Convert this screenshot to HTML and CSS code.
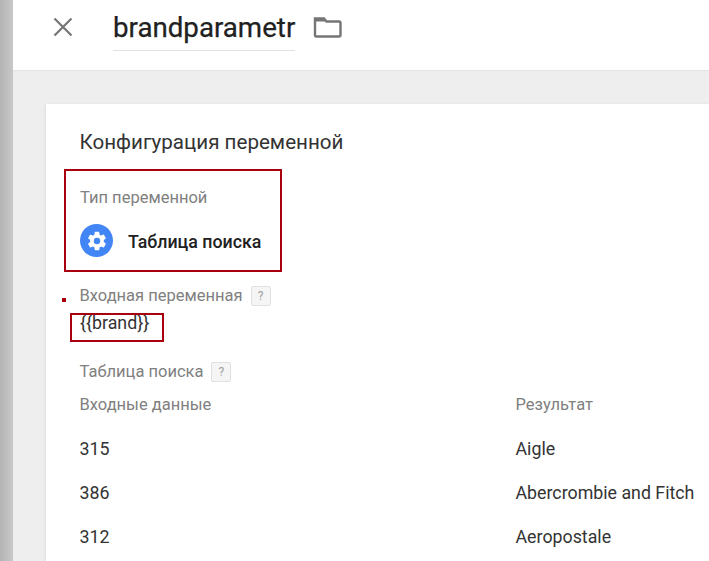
FILE: index.html
```html
<!DOCTYPE html>
<html lang="ru">
<head>
<meta charset="utf-8">
<title>brandparametr</title>
<link rel="stylesheet" href="styles.css">
</head>
<body>
<div class="shade"></div>
<div class="app">
  <header class="topbar">
    <svg class="close" width="24" height="24" viewBox="0 0 24 24"><path d="M3.500 3.500 20.500 20.500M20.500 3.500 3.500 20.500" fill="none" stroke="#757575" stroke-width="2.200"/></svg>
    <div class="name">brandparametr</div>
    <svg class="folder" width="30" height="24" viewBox="0 0 30 24"><path d="M2 3.500h9l2.500 3H26a1.500 1.500 0 0 1 1.500 1.500v12a1.500 1.500 0 0 1-1.500 1.500H3.500A1.500 1.500 0 0 1 2 20Z" fill="none" stroke="#757575" stroke-width="2.400"/><path d="M2 3h9l3 3.500H2Z" fill="#757575"/></svg>
  </header>
  <main class="canvas">
    <section class="card">
      <h2 class="title">Конфигурация переменной</h2>
      <div class="type-box">
        <div class="label">Тип переменной</div>
        <div class="type-row">
          <span class="gear">
            <svg width="22" height="22" viewBox="0 0 24 24"><path fill="#fff" d="M19.400 13c.04-.32.06-.66.06-1s-.02-.68-.07-1l2.100-1.650a.5.500 0 0 0 .12-.64l-2-3.460a.5.500 0 0 0-.61-.22l-2.490 1a7.300 7.300 0 0 0-1.690-.98l-.38-2.650A.49.490 0 0 0 14 2h-4a.49.490 0 0 0-.49.42l-.38 2.650c-.61.25-1.170.59-1.690.98l-2.490-1a.5.500 0 0 0-.61.22l-2 3.460a.49.490 0 0 0 .12.64L4.560 11c-.05.32-.08.67-.08 1s.02.68.07 1l-2.100 1.650a.5.500 0 0 0-.12.64l2 3.460c.12.22.38.300.61.22l2.490-1c.52.400 1.080.73 1.690.98l.38 2.650c.05.24.25.42.49.42h4c.25 0 .45-.18.49-.42l.38-2.650c.61-.25 1.170-.59 1.690-.98l2.490 1c.23.080.49 0 .61-.22l2-3.460a.5.500 0 0 0-.12-.64ZM12 15.500a3.500 3.500 0 1 1 0-7 3.500 3.500 0 0 1 0 7Z"/></svg>
          </span>
          <span class="type-name">Таблица поиска</span>
        </div>
      </div>
      <div class="field-head">
        <span class="label">Входная переменная</span><span class="help">?</span>
        <i class="mark"></i>
      </div>
      <div class="brand-wrap"><span class="brand">{{brand}}</span></div>
      <div class="field-head lookup">
        <span class="label">Таблица поиска</span><span class="help">?</span>
      </div>
      <div class="table">
        <div class="label">Входные данные</div><div class="label">Результат</div>
        <div class="cell">315</div><div class="cell">Aigle</div>
        <div class="cell">386</div><div class="cell">Abercrombie and Fitch</div>
        <div class="cell">312</div><div class="cell">Aeropostale</div>
      </div>
    </section>
  </main>
</div>
</body>
</html>
```
FILE: styles.css
```css
* { box-sizing: border-box; }
html, body { margin: 0; height: 561px; overflow: hidden; }
body {
  display: flex;
  background: #fff;
  font-family: Roboto, "Noto Sans", sans-serif;
}
.shade {
  width: 13px;
  flex: none;
  background: linear-gradient(to right, #b4b4b4, #c8c8c8);
}
.app { flex: 1; min-width: 0; display: flex; flex-direction: column; }
.topbar {
  height: 71px;
  flex: none;
  display: flex;
  align-items: flex-start;
  background: #fff;
  border-bottom: 1px solid #e3e3e3;
}
.close { margin: 15px 0 0 38px; flex: none; }
.name {
  margin: 7px 0 0 38px;
  height: 44px;
  line-height: 41px;
  font-size: 27.700px;
  font-weight: 400;
  color: #212121;
  border-bottom: 1px solid #e0e0e0;
  -webkit-text-stroke: .25px #212121;
}
.folder { margin: 15px 0 0 18px; flex: none; }
.canvas { flex: 1; background: #eee; padding: 33px 0 0 33px; min-height: 0; }
.card {
  height: 100%;
  background: #fff;
  padding: 25px 0 0 33.500px;
  box-shadow: 0 1px 3px rgba(0,0,0,.12);
}
.title {
  margin: 0;
  font-size: 20.600px;
  line-height: 26px;
  font-weight: 400;
  color: #333;
}
.label { font-size: 16.500px; line-height: 20px; color: #808080; }
.type-box {
  margin: 14px 0 0 -15.500px;
  width: 218px;
  height: 103px;
  border: 2px solid #a8000f;
  padding: 17px 0 0 14px;
}
.type-row { display: flex; align-items: center; margin-top: 16px; }
.gear {
  width: 33px;
  height: 33px;
  border-radius: 50%;
  background: #4285f4;
  display: flex;
  align-items: center;
  justify-content: center;
  flex: none;
}
.type-name { margin-left: 15px; padding-top: 2px; font-size: 17.800px; font-weight: 500; color: #212121; }
.field-head { position: relative; display: flex; align-items: center; margin-top: 14px; height: 20px; }
.help {
  width: 20px;
  height: 20px;
  margin-left: 8px;
  background: #f5f5f5;
  border: 1px solid #e0e0e0;
  border-radius: 2px;
  font-size: 12px;
  line-height: 18px;
  text-align: center;
  color: #9e9e9e;
}
.mark {
  position: absolute;
  left: -18px;
  top: 12px;
  width: 4px;
  height: 4px;
  background: #a8000f;
}
.brand-wrap { margin-top: 7px; height: 21px; }
.brand {
  display: inline-block;
  margin-left: -9.500px;
  width: 94px;
  height: 29px;
  border: 2px solid #a8000f;
  padding-left: 8px;
  font-size: 17.800px;
  line-height: 16px;
  color: #333;
}
.lookup { margin-top: 28px; }
.table {
  display: grid;
  grid-template-columns: 436px 1fr;
  grid-template-rows: 24px repeat(3, 44px);
  margin-top: 13px;
  align-items: center;
}
.table .label { align-self: start; }
.cell { font-size: 17.800px; line-height: 24px; color: #333; padding-top: 15px; }
```
